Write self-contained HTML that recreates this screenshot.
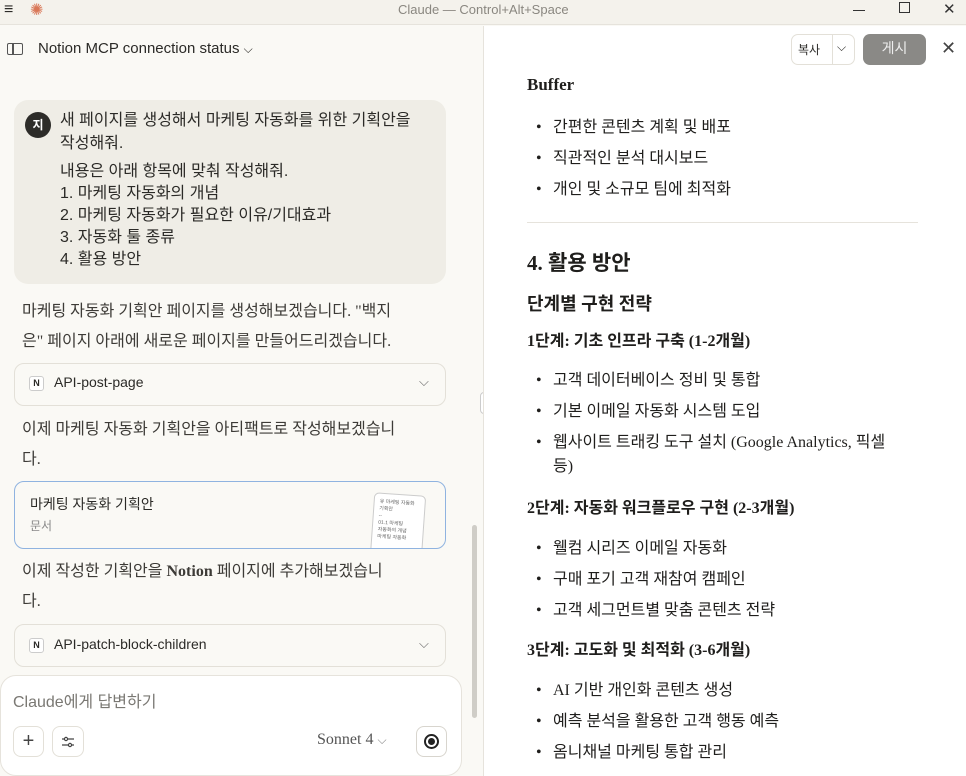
<!DOCTYPE html>
<html><head><meta charset="utf-8"><style>
*{margin:0;padding:0;box-sizing:border-box}
body{width:966px;height:776px;overflow:hidden;background:#faf9f5;font-family:"Liberation Sans","Noto Sans CJK KR",sans-serif;color:#2b2a27;position:relative}
.a{position:absolute;white-space:nowrap}
.t{font-size:16px;color:#3d3b37}
.s{font-family:"Liberation Serif","Noto Sans CJK KR",serif}
.r{font-family:"Liberation Serif","Noto Sans CJK KR",serif;color:#1f1e1c}
.box{position:absolute;border:1px solid #e3e0d8;border-radius:10px;background:#faf9f5}
.li{font-size:16px;line-height:24px}
.li:before{content:"•";position:absolute;left:-17px;top:0}
</style></head><body>
<div class="a" style="left:0;top:0;width:966px;height:25px;background:#f4f2ec;border-bottom:1px solid #e6e3dc"></div>
<div class="a" style="left:4px;top:1px;font-size:16px">≡</div>
<div class="a" style="left:30px;top:0px;font-size:16px;color:#d97757">✺</div>
<div class="a" style="left:398px;top:2px;font-size:13px;color:#8a8780">Claude — Control+Alt+Space</div>
<div class="a" style="left:853px;top:10px;width:12px;height:1px;background:#333"></div>
<div class="a" style="left:899px;top:2px;width:11px;height:11px;border:1px solid #333"></div>
<div class="a" style="left:943px;top:0px;font-size:15px;color:#333">✕</div>
<div class="a" style="left:7px;top:43px;width:16px;height:12px;border:1.5px solid #555;border-radius:2px"></div>
<div class="a" style="left:12px;top:43px;width:1.5px;height:12px;background:#555"></div>
<div class="a" style="left:38px;top:40px;font-size:15px;color:#2b2a27">Notion MCP connection status <span style="font-size:12px">⌵</span></div>
<div class="a" style="left:14px;top:100px;width:432px;height:184px;background:#efede6;border-radius:14px"></div>
<div class="a" style="left:25px;top:112px;width:26px;height:26px;border-radius:50%;background:#2d2c29;color:#fff;font-size:12px;font-weight:bold;text-align:center;line-height:26px">지</div>
<div class="a t" style="left:60px;top:109px;line-height:23px;color:#2b2a27">새 페이지를 생성해서 마케팅 자동화를 위한 기획안을<br>작성해줘.</div>
<div class="a t" style="left:60px;top:161px;line-height:22px;color:#2b2a27">내용은 아래 항목에 맞춰 작성해줘.<br>1. 마케팅 자동화의 개념<br>2. 마케팅 자동화가 필요한 이유/기대효과<br>3. 자동화 툴 종류<br>4. 활용 방안</div>
<div class="a t s" style="left:22px;top:297px;line-height:30px">마케팅 자동화 기획안 페이지를 생성해보겠습니다. "백지<br>은" 페이지 아래에 새로운 페이지를 만들어드리겠습니다.</div>
<div class="box" style="left:14px;top:363px;width:432px;height:43px"></div>
<div class="a" style="left:29px;top:376px;width:15px;height:15px;border:1px solid #ccc;border-radius:3px;font-size:9px;font-weight:bold;text-align:center;line-height:13px;background:#fff">N</div>
<div class="a" style="left:54px;top:374px;font-size:14px">API-post-page</div>
<div class="a" style="left:419px;top:374px;font-size:13px;color:#666">⌵</div>
<div class="a t s" style="left:22px;top:415px;line-height:30px">이제 마케팅 자동화 기획안을 아티팩트로 작성해보겠습니<br>다.</div>
<div class="a" style="left:14px;top:481px;width:432px;height:68px;border:1px solid #8fb3e0;border-radius:10px;background:#faf9f5;overflow:hidden">
<div class="a" style="left:15px;top:12px;font-size:14px">마케팅 자동화 기획안</div>
<div class="a" style="left:15px;top:35px;font-size:12px;color:#888">문서</div>
<div class="a" style="left:357px;top:12px;width:52px;height:65px;border:1px solid #ccc;border-radius:5px;background:#fff;transform:rotate(4deg);font-size:5px;color:#666;padding:5px;white-space:normal;line-height:7px">유 마케팅 자동화 기획안<br>--<br>01.1 마케팅<br>자동화의 개념<br>마케팅 자동화</div>
</div>
<div class="a t s" style="left:22px;top:557px;line-height:30px">이제 작성한 기획안을 <b>Notion</b> 페이지에 추가해보겠습니<br>다.</div>
<div class="box" style="left:14px;top:624px;width:432px;height:43px"></div>
<div class="a" style="left:29px;top:638px;width:15px;height:15px;border:1px solid #ccc;border-radius:3px;font-size:9px;font-weight:bold;text-align:center;line-height:13px;background:#fff">N</div>
<div class="a" style="left:54px;top:636px;font-size:14px">API-patch-block-children</div>
<div class="a" style="left:419px;top:636px;font-size:13px;color:#666">⌵</div>
<div class="a" style="left:472px;top:525px;width:5px;height:193px;background:#cfcdc7;border-radius:3px"></div>
<div class="a" style="left:480px;top:392px;width:8px;height:22px;border:1px solid #ccc;border-radius:4px;background:#fff"></div>
<div class="a" style="left:0;top:675px;width:462px;height:101px;background:#fff;border:1px solid #e6e3dc;border-radius:16px"></div>
<div class="a" style="left:13px;top:688px;font-size:16px;color:#7a7873">Claude에게 답변하기</div>
<div class="a" style="left:13px;top:726px;width:31px;height:31px;border:1px solid #e3e0d8;border-radius:8px;text-align:center;line-height:29px;font-size:20px;color:#444">+</div>
<div class="a" style="left:52px;top:726px;width:32px;height:31px;border:1px solid #e3e0d8;border-radius:8px"></div>
<svg class="a" style="left:61px;top:735px" width="14" height="14" viewBox="0 0 14 14" fill="none" stroke="#444" stroke-width="1.2"><path d="M1 4h12M1 10h12"/><circle cx="5" cy="4" r="1.6" fill="#fff"/><circle cx="9" cy="10" r="1.6" fill="#fff"/></svg>
<div class="a" style="left:317px;top:731px;font-size:16px;color:#555;font-family:'Liberation Serif',serif">Sonnet 4 <span style="font-size:12px;color:#888">⌵</span></div>
<div class="a" style="left:416px;top:726px;width:31px;height:31px;border:1px solid #d8d5ce;border-radius:8px"></div>
<div class="a" style="left:424px;top:734px;width:15px;height:15px;border:2px solid #222;border-radius:50%"></div>
<div class="a" style="left:428px;top:738px;width:7px;height:7px;background:#222;border-radius:50%"></div>
<div class="a" style="left:483px;top:26px;width:483px;height:750px;background:#fff;border-left:1px solid #e6e3dc"></div>
<div class="a" style="left:791px;top:34px;width:64px;height:31px;border:1px solid #e3e0d8;border-radius:7px"></div>
<div class="a" style="left:832px;top:34px;width:1px;height:31px;background:#e3e0d8"></div>
<div class="a" style="left:798px;top:41px;font-size:12px">복사</div>
<div class="a" style="left:837px;top:40px;font-size:12px">⌵</div>
<div class="a" style="left:863px;top:34px;width:63px;height:31px;background:#8a8986;border-radius:7px;color:#eee;font-size:14px;text-align:center;line-height:29px">게시</div>
<div class="a" style="left:941px;top:38px;font-size:18px;color:#444">✕</div>
<div class="a r" style="left:527px;top:75px;font-size:17px;font-weight:bold">Buffer</div>
<div class="a r li" style="left:553px;top:116px">간편한 콘텐츠 계획 및 배포</div>
<div class="a r li" style="left:553px;top:147px">직관적인 분석 대시보드</div>
<div class="a r li" style="left:553px;top:178px">개인 및 소규모 팀에 최적화</div>
<div class="a" style="left:527px;top:222px;width:391px;height:1px;background:#e6e3dc"></div>
<div class="a r" style="left:527px;top:247px;font-size:21px;font-weight:bold">4. 활용 방안</div>
<div class="a r" style="left:527px;top:290px;font-size:18px;font-weight:bold">단계별 구현 전략</div>
<div class="a r" style="left:527px;top:327px;font-size:16px;font-weight:bold">1단계: 기초 인프라 구축 (1-2개월)</div>
<div class="a r li" style="left:553px;top:369px">고객 데이터베이스 정비 및 통합</div>
<div class="a r li" style="left:553px;top:400px">기본 이메일 자동화 시스템 도입</div>
<div class="a r li" style="left:553px;top:431px">웹사이트 트래킹 도구 설치 (Google Analytics, 픽셀<br>등)</div>
<div class="a r" style="left:527px;top:494px;font-size:16px;font-weight:bold">2단계: 자동화 워크플로우 구현 (2-3개월)</div>
<div class="a r li" style="left:553px;top:537px">웰컴 시리즈 이메일 자동화</div>
<div class="a r li" style="left:553px;top:568px">구매 포기 고객 재참여 캠페인</div>
<div class="a r li" style="left:553px;top:599px">고객 세그먼트별 맞춤 콘텐츠 전략</div>
<div class="a r" style="left:527px;top:636px;font-size:16px;font-weight:bold">3단계: 고도화 및 최적화 (3-6개월)</div>
<div class="a r li" style="left:553px;top:679px">AI 기반 개인화 콘텐츠 생성</div>
<div class="a r li" style="left:553px;top:710px">예측 분석을 활용한 고객 행동 예측</div>
<div class="a r li" style="left:553px;top:741px">옴니채널 마케팅 통합 관리</div>
</body></html>
